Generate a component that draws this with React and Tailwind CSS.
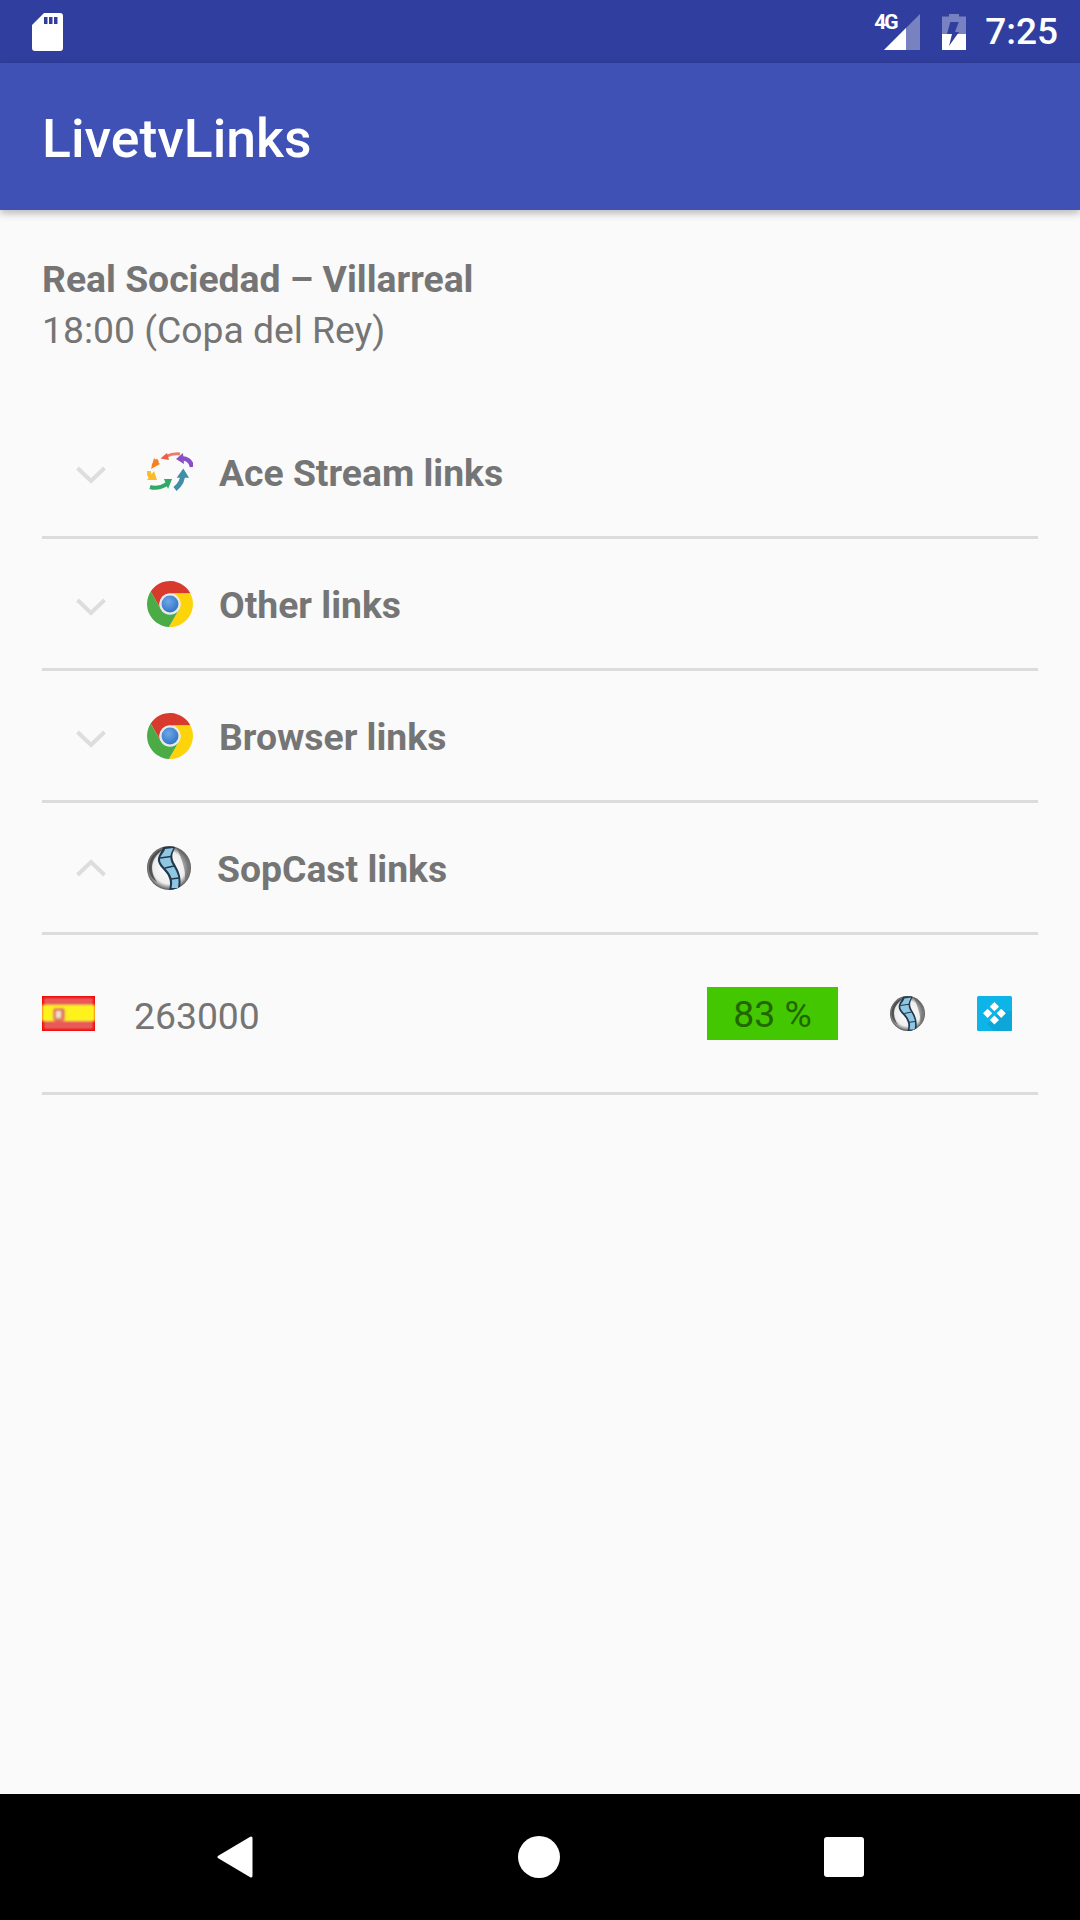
const F = "font-['Roboto',sans-serif]";

function Chevron({ up }) {
  return (
    <svg width="30" height="18" viewBox="0 0 30 18" className={up ? "shrink-0" : "shrink-0 mt-[6px]"}>
      <path d={up ? "M1.5 16 L15 3 L28.5 16" : "M1.5 2 L15 15 L28.5 2"} fill="none" stroke="#dddddd" strokeWidth="4" />
    </svg>
  );
}

function Chrome({ id = "c" }) {
  return (
    <svg width="46" height="46" viewBox="0 0 48 48" className="shrink-0">
      <defs>
        <radialGradient id={id} cx="40%" cy="35%" r="70%">
          <stop offset="0" stopColor="#6fa8e8" />
          <stop offset="1" stopColor="#2f72c4" />
        </radialGradient>
      </defs>
      <path d="M45.3 13 L24 13 A11 11 0 0 0 14.47 29.5 L3.82 11.05 A24 24 0 0 1 45.3 13Z" fill="#d93a2e" />
      <path d="M22.88 47.95 L33.53 29.5 A11 11 0 0 0 24 13 L45.3 13 A24 24 0 0 1 22.88 47.95Z" fill="#fdd40a" />
      <path d="M3.82 11.05 L14.47 29.5 A11 11 0 0 0 33.53 29.5 L22.88 47.95 A24 24 0 0 1 3.82 11.05Z" fill="#4bab47" />
      <circle cx="24" cy="24" r="11" fill="#e8e8e8" />
      <circle cx="24" cy="24" r="8.8" fill={`url(#${id})`} />
    </svg>
  );
}

function Ace() {
  return (
    <svg width="46" height="40" viewBox="0 0 46 40" className="shrink-0">
      <defs>
        <filter id="ab" x="-10%" y="-10%" width="120%" height="120%"><feGaussianBlur stdDeviation="0.7" /></filter>
      </defs>
      <g filter="url(#ab)">
        <g fill="none" strokeLinecap="butt">
          <path d="M33 2 C28 1.500 23 2.500 19 4.500" stroke="#ef7a6a" strokeWidth="3" />
          <path d="M11 8 C8 10 7 12 6 14" stroke="#f58220" strokeWidth="3.500" />
          <path d="M33 7 C39 5 44 9 45 15" stroke="#8a4fc8" strokeWidth="4.500" />
          <path d="M35.500 22 C36 28 33 33 28 37" stroke="#3f8ea8" strokeWidth="5" />
          <path d="M3 35 C9 37 15 35 20 32" stroke="#2eaa66" strokeWidth="4" />
          <path d="M1.500 19 C1.500 21 2 23 4 25" stroke="#fcbc2c" strokeWidth="4.500" />
        </g>
        <path d="M13.500 6.500 L20 1 L22 8Z" fill="#ef5f3c" />
        <path d="M4 17 L13 12 L7 6Z" fill="#f58220" />
        <path d="M29 7 L36 1 L37 12Z" fill="#8a4fc8" />
        <path d="M29.700 25.700 L36.300 16.500 L42 25.700Z" fill="#3f8ea8" />
        <path d="M17 27 L25 27 L21 37Z" fill="#2eaa66" />
        <path d="M0 28 L10 28 L7 19Z" fill="#fcbc2c" />
      </g>
    </svg>
  );
}

function Sop({ size, id }) {
  return (
    <svg width={size} height={size} viewBox="0 0 44 44" className="shrink-0">
      <defs>
        <radialGradient id={id} cx="50%" cy="50%" r="50%">
          <stop offset="0" stopColor="#ffffff" />
          <stop offset="0.72" stopColor="#eeeeee" />
          <stop offset="0.88" stopColor="#999999" />
          <stop offset="1" stopColor="#555555" />
        </radialGradient>
        <filter id={`${id}b`} x="-5%" y="-5%" width="110%" height="110%"><feGaussianBlur stdDeviation="0.75" /></filter>
        <clipPath id={`${id}c`}><circle cx="22" cy="22" r="22" /></clipPath>
      </defs>
      <circle cx="22" cy="22" r="22" fill={`url(#${id})`} />
      <g filter={`url(#${id}b)`} clipPath={`url(#${id}c)`}>
        <path d="M2 24 C1 12 9 4 16 3 C9 9 5 14 5 22 C5 27 7 32 10 36 C5 33 3 29 2 24Z" fill="#333333" opacity="0.75" />
        <path d="M30 2 C37 5 42 12 42 22 C42 26 41 30 38 34 C39 24 35 14 30 2Z" fill="#555555" opacity="0.55" />
        <path d="M16 1 L29 0 C26 6 25 8 25.500 12 C26 17 31 21 33 30 C34 35 33.500 38 33 44 L22 44 C24 37 23 33 20 28 C16 22 10 19 11 12 C12 8 15 5 16 1Z" fill="#22384c" />
        <path d="M18 3 L26.500 2 C24 7 23 9 23.500 13 C24 18 29 22 31 30 C32 35 31.500 38 31 42 L24.500 42 C26 36 25 32 22 27 C18 21 12.500 18 13 13 C13.500 9 17 7 18 3Z" fill="#8fc6e2" />
        <path d="M13 12 L24 10.500 M18 22 L27 20 M24 33 L32 32" stroke="#22384c" strokeWidth="1.300" fill="none" />
      </g>
    </svg>
  );
}

function Kodi() {
  return (
    <svg width="35" height="35" viewBox="0 0 35 35" className="shrink-0">
      <rect width="35" height="35" rx="1.500" fill="#0db4e8" />
      <path d="M35 15 L35 33.500 A1.500 1.500 0 0 1 33.500 35 L17 35 L10 28 L24 15Z" fill="#0ca6d8" />
      <g fill="#ffffff">
        <path d="M17.400 6 L22 10.700 L17.400 15.300 L12.800 10.700Z" />
        <path d="M10.600 12.700 L15.200 17.300 L10.600 22 L6 17.300Z" />
        <path d="M24.200 12.700 L28.800 17.300 L24.200 22 L19.600 17.300Z" />
        <path d="M17.400 19.400 L22 24 L17.400 28.600 L12.800 24Z" />
      </g>
    </svg>
  );
}

function Flag() {
  return (
    <svg width="53" height="35" viewBox="0 0 53 35" className="shrink-0">
      <defs>
        <filter id="fb" x="-5%" y="-5%" width="110%" height="110%"><feGaussianBlur stdDeviation="1" /></filter>
      </defs>
      <rect width="53" height="35" fill="#f00a0a" />
      <g filter="url(#fb)">
        <rect x="2" y="2" width="49" height="31" fill="#e85a5a" />
        <rect x="0" y="9" width="53" height="16" fill="#fdf21a" />
        <rect x="11" y="12" width="12" height="13" rx="3" fill="#e07a5a" />
        <rect x="14" y="15" width="5" height="7" fill="#eee0c8" />
      </g>
    </svg>
  );
}

function Row({ icon, label, up }) {
  return (
    <div className="h-[132px] flex items-center border-b-[3px] border-[#dcdcdc] pl-[34px]">
      <Chevron up={up} />
      <div className="ml-[41px] flex">{icon}</div>
      <span className="ml-[26px] mt-[5px] text-[37.3px] font-bold text-[#757575] leading-none">{label}</span>
    </div>
  );
}

export default function App() {
  return (
    <div className={`${F} w-[1080px] h-[1920px] flex flex-col bg-[#fafafa] overflow-hidden`}>
      <div className="h-[63px] shrink-0 bg-[#303f9f] flex items-center pl-[32px] pr-[22px]">
        <svg width="31" height="38" viewBox="0 0 31 38">
          <path fillRule="evenodd" d="M12 0 H28 A3 3 0 0 1 31 3 V35 A3 3 0 0 1 28 38 H3 A3 3 0 0 1 0 35 V12Z M12 4 V11 H15.500 V4Z M17 4 V11 H20.500 V4Z M22 4 V11 H25.500 V4Z" fill="#ffffff" />
        </svg>
        <div className="flex-1" />
        <div className="relative w-[46px] h-[36px] flex items-end justify-end">
          <svg width="36" height="36" viewBox="0 0 36 36">
            <path d="M36 0 V36 H0Z" fill="#ffffff" opacity="0.35" />
            <path d="M22 14 V36 H0Z" fill="#ffffff" />
          </svg>
          <span className="absolute left-0 top-0 text-[21px] leading-[17px] tracking-[-2px] font-bold text-white">4G</span>
        </div>
        <svg width="24" height="36" viewBox="0 0 24 36" className="ml-[22px]">
          <path d="M7 0 H17 V2.500 H24 V20 H0 V2.500 H7Z" fill="#ffffff" opacity="0.35" />
          <path d="M0 20 H24 V36 H0Z" fill="#ffffff" />
          <path d="M8.300 8 H16.700 L13 18 H17 L7 32 L10 20 H5Z" fill="#303f9f" />
        </svg>
        <span className="ml-[19px] text-[37px] leading-none font-medium text-white">7:25</span>
      </div>

      <div className="h-[147px] shrink-0 bg-[#3f51b5] flex items-center pl-[42px] pt-[4px] shadow-[0_3px_8px_rgba(0,0,0,0.28)] relative">
        <span className="text-[53.5px] leading-none font-medium text-white">LivetvLinks</span>
      </div>

      <div className="flex-1 px-[42px] pt-[48px]">
        <div className="text-[37.3px] leading-[42px] font-bold text-[#757575]">Real Sociedad – Villarreal</div>
        <div className="text-[37.3px] leading-[50px] mt-[5px] text-[#757575] mb-[52px]">18:00 (Copa del Rey)</div>

        <Row label="Ace Stream links" icon={<Ace />} />
        <Row label="Other links" icon={<Chrome id="c1" />} />
        <Row label="Browser links" icon={<Chrome id="c2" />} />
        <Row up label="SopCast links" icon={<Sop size={44} id="s1" />} />

        <div className="h-[160px] flex items-center border-b-[3px] border-[#dcdcdc]">
          <Flag />
          <span className="ml-[39px] mt-[6px] text-[37.3px] leading-none text-[#757575] flex-1">263000</span>
          <div className="w-[131px] h-[53px] pt-[2px] bg-[#43c700] flex items-center justify-center text-[37.3px] leading-none text-[#226600]">83 %</div>
          <div className="ml-[52px] flex"><Sop size={35} id="s2" /></div>
          <div className="ml-[52px] mr-[26px] flex"><Kodi /></div>
        </div>
      </div>

      <div className="h-[126px] shrink-0 bg-black flex items-center justify-center gap-[264px]">
        <svg width="38" height="42" viewBox="0 0 38 42">
          <path d="M35 2 V40 L3 21Z" fill="#ffffff" stroke="#ffffff" strokeWidth="3" strokeLinejoin="round" />
        </svg>
        <div className="w-[42px] h-[42px] rounded-full bg-white" />
        <div className="w-[40px] h-[40px] rounded-[3px] bg-white" />
      </div>
    </div>
  );
}
